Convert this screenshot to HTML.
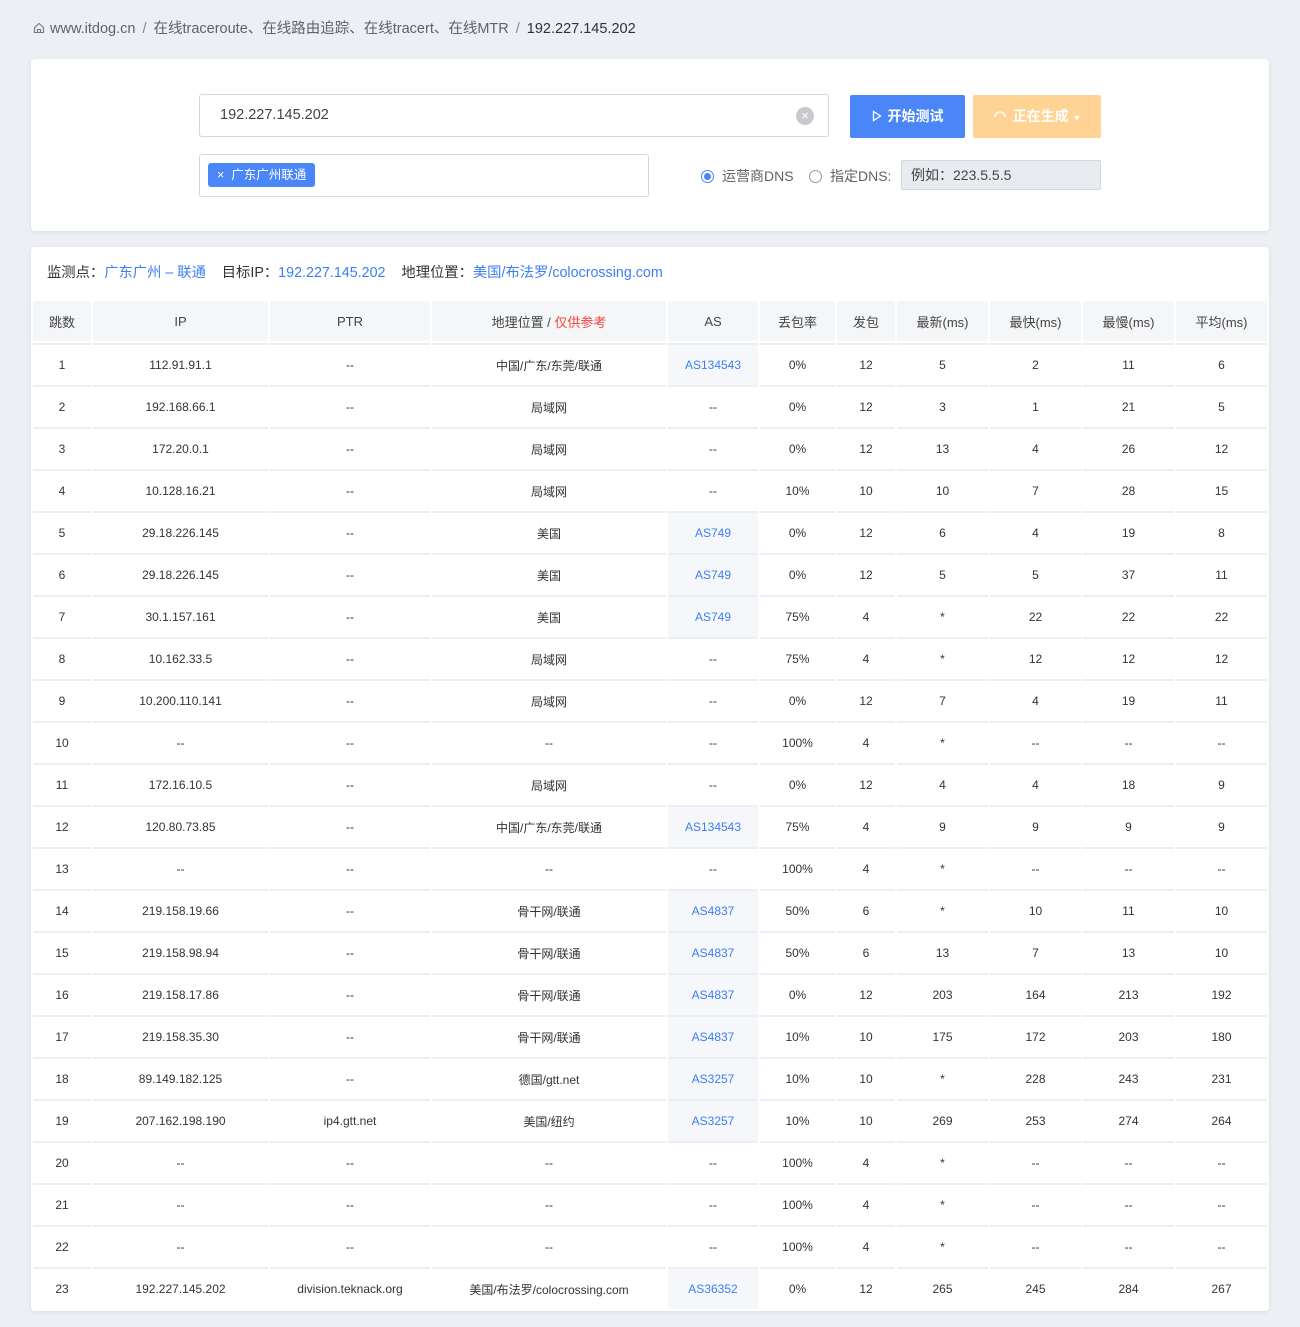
<!DOCTYPE html>
<html><head><meta charset="utf-8">
<style>
*{box-sizing:border-box;margin:0;padding:0}
body{width:1300px;height:1327px;background:#eceff4;font-family:"Liberation Sans","Noto Sans CJK SC",sans-serif;color:#333;overflow:hidden;position:relative}
.bc{position:absolute;left:33px;top:19px;font-size:14.5px;color:#606266;line-height:20px}
.bc .sep{margin:0 7px;color:#888}
.bc b{font-weight:normal;color:#303133}
.card{position:absolute;left:31px;width:1238px;background:#fff;border-radius:4px;box-shadow:0 1px 4px rgba(0,0,0,.08)}
.c1{top:59px;height:172px}
.c2{top:247px;height:1064px}
.inp{position:absolute;left:168px;top:35px;width:630px;height:43px;border:1px solid #d4d7de;border-radius:3px;font-size:14.5px;padding-left:20px;line-height:41px;color:#444}
.clr{position:absolute;right:14px;top:12px;width:18px;height:18px;border-radius:50%;background:#c8c9cc;color:#fff;font-size:13px;line-height:18px;text-align:center}
.tagbox{position:absolute;left:168px;top:95px;width:450px;height:43px;border:1px solid #d4d7de;border-radius:3px}
.tag{position:absolute;left:8px;top:8px;height:24px;padding:0 9px;background:#4a86f7;color:#fff;border-radius:3px;font-size:12.5px;line-height:24px}
.btn{position:absolute;top:36px;height:43px;color:#fff;font-size:14px;line-height:43px;text-align:center;border-radius:2px;font-weight:bold}
.b1{left:819px;width:115px;background:#4a86f7}
.b2{left:942px;width:128px;background:#fed394}
.radio{position:absolute;top:108px;font-size:14px;color:#606266;line-height:18px}
.rd{display:inline-block;width:13px;height:13px;border-radius:50%;border:1px solid #999;vertical-align:-2px;margin-right:8px;position:relative}
.rd.on{border-color:#4a86f7}
.rd.on:after{content:"";position:absolute;left:2px;top:2px;width:7px;height:7px;border-radius:50%;background:#4a86f7}
.dns{position:absolute;left:870px;top:101px;width:200px;height:30px;background:#e8ebef;border:1px solid #d4d7de;border-radius:2px;font-size:14px;line-height:28px;padding-left:9px;color:#444}
.info{position:absolute;left:16px;top:17px;font-size:14.3px;color:#333;line-height:18px}
.info a{color:#3d7ef6;text-decoration:none}
table{position:absolute;left:0;top:54px;border-collapse:separate;border-spacing:2px 0;table-layout:fixed;width:1238px}
th{height:42px;background:#f5f6f8;font-weight:normal;font-size:13px;color:#444;border-bottom:2px solid #fff}
td{height:42px;text-align:center;font-size:12px;color:#333;border-top:2px solid #eceef2}
td.as{color:#3d7ef6}
td.asb{background:#f5f7fa}
.red{color:#f5443a}
</style></head><body>
<div class="bc"><svg width="12" height="12" viewBox="0 0 12 12" style="vertical-align:-1px;margin-right:5px"><path d="M1.5 5.5L6 1.5L10.5 5.5V10.5H1.5Z M4.5 10.5V7.5H7.5V10.5" fill="none" stroke="#777" stroke-width="1.1"/></svg>www.itdog.cn<span class="sep">/</span>在线traceroute、在线路由追踪、在线tracert、在线MTR<span class="sep">/</span><b>192.227.145.202</b></div>
<div class="card c1">
<div class="inp">192.227.145.202<div class="clr">×</div></div>
<div class="tagbox"><div class="tag">×&nbsp; 广东广州联通</div></div>
<div class="btn b1"><svg width="10" height="12" viewBox="0 0 10 12" style="vertical-align:-1px;margin-right:6px"><path d="M1.5 1.5L8.5 6L1.5 10.5Z" fill="none" stroke="#fff" stroke-width="1.3"/></svg>开始测试</div>
<div class="btn b2"><svg width="14" height="10" viewBox="0 0 14 10" style="margin-right:6px"><path d="M2 6A5 5 0 0 1 12 6" fill="none" stroke="#fff" stroke-width="1.5"/></svg>正在生成 <span style="font-size:9px">▼</span></div>
<div class="radio" style="left:670px"><span class="rd on"></span>运营商DNS</div>
<div class="radio" style="left:778px"><span class="rd"></span>指定DNS:</div>
<div class="dns">例如：223.5.5.5</div>
</div>
<div class="card c2">
<div class="info">监测点：<a>广东广州 – 联通</a>&nbsp;&nbsp;&nbsp;&nbsp;目标IP：<a>192.227.145.202</a>&nbsp;&nbsp;&nbsp;&nbsp;地理位置：<a>美国/布法罗/colocrossing.com</a></div>
<table>
<colgroup><col style="width:58px"><col style="width:175px"><col style="width:160px"><col style="width:234px"><col style="width:90px"><col style="width:75px"><col style="width:58px"><col style="width:91px"><col style="width:91px"><col style="width:91px"><col style="width:91px"></colgroup>
<thead><tr><th>跳数</th><th>IP</th><th>PTR</th><th>地理位置 / <span class="red">仅供参考</span></th><th>AS</th><th>丢包率</th><th>发包</th><th>最新(ms)</th><th>最快(ms)</th><th>最慢(ms)</th><th>平均(ms)</th></tr></thead>
<tbody>
<tr><td>1</td><td>112.91.91.1</td><td>--</td><td>中国/广东/东莞/联通</td><td class="as asb">AS134543</td><td>0%</td><td>12</td><td>5</td><td>2</td><td>11</td><td>6</td></tr>
<tr><td>2</td><td>192.168.66.1</td><td>--</td><td>局域网</td><td>--</td><td>0%</td><td>12</td><td>3</td><td>1</td><td>21</td><td>5</td></tr>
<tr><td>3</td><td>172.20.0.1</td><td>--</td><td>局域网</td><td>--</td><td>0%</td><td>12</td><td>13</td><td>4</td><td>26</td><td>12</td></tr>
<tr><td>4</td><td>10.128.16.21</td><td>--</td><td>局域网</td><td>--</td><td>10%</td><td>10</td><td>10</td><td>7</td><td>28</td><td>15</td></tr>
<tr><td>5</td><td>29.18.226.145</td><td>--</td><td>美国</td><td class="as asb">AS749</td><td>0%</td><td>12</td><td>6</td><td>4</td><td>19</td><td>8</td></tr>
<tr><td>6</td><td>29.18.226.145</td><td>--</td><td>美国</td><td class="as asb">AS749</td><td>0%</td><td>12</td><td>5</td><td>5</td><td>37</td><td>11</td></tr>
<tr><td>7</td><td>30.1.157.161</td><td>--</td><td>美国</td><td class="as asb">AS749</td><td>75%</td><td>4</td><td>*</td><td>22</td><td>22</td><td>22</td></tr>
<tr><td>8</td><td>10.162.33.5</td><td>--</td><td>局域网</td><td>--</td><td>75%</td><td>4</td><td>*</td><td>12</td><td>12</td><td>12</td></tr>
<tr><td>9</td><td>10.200.110.141</td><td>--</td><td>局域网</td><td>--</td><td>0%</td><td>12</td><td>7</td><td>4</td><td>19</td><td>11</td></tr>
<tr><td>10</td><td>--</td><td>--</td><td>--</td><td>--</td><td>100%</td><td>4</td><td>*</td><td>--</td><td>--</td><td>--</td></tr>
<tr><td>11</td><td>172.16.10.5</td><td>--</td><td>局域网</td><td>--</td><td>0%</td><td>12</td><td>4</td><td>4</td><td>18</td><td>9</td></tr>
<tr><td>12</td><td>120.80.73.85</td><td>--</td><td>中国/广东/东莞/联通</td><td class="as asb">AS134543</td><td>75%</td><td>4</td><td>9</td><td>9</td><td>9</td><td>9</td></tr>
<tr><td>13</td><td>--</td><td>--</td><td>--</td><td>--</td><td>100%</td><td>4</td><td>*</td><td>--</td><td>--</td><td>--</td></tr>
<tr><td>14</td><td>219.158.19.66</td><td>--</td><td>骨干网/联通</td><td class="as asb">AS4837</td><td>50%</td><td>6</td><td>*</td><td>10</td><td>11</td><td>10</td></tr>
<tr><td>15</td><td>219.158.98.94</td><td>--</td><td>骨干网/联通</td><td class="as asb">AS4837</td><td>50%</td><td>6</td><td>13</td><td>7</td><td>13</td><td>10</td></tr>
<tr><td>16</td><td>219.158.17.86</td><td>--</td><td>骨干网/联通</td><td class="as asb">AS4837</td><td>0%</td><td>12</td><td>203</td><td>164</td><td>213</td><td>192</td></tr>
<tr><td>17</td><td>219.158.35.30</td><td>--</td><td>骨干网/联通</td><td class="as asb">AS4837</td><td>10%</td><td>10</td><td>175</td><td>172</td><td>203</td><td>180</td></tr>
<tr><td>18</td><td>89.149.182.125</td><td>--</td><td>德国/gtt.net</td><td class="as asb">AS3257</td><td>10%</td><td>10</td><td>*</td><td>228</td><td>243</td><td>231</td></tr>
<tr><td>19</td><td>207.162.198.190</td><td>ip4.gtt.net</td><td>美国/纽约</td><td class="as asb">AS3257</td><td>10%</td><td>10</td><td>269</td><td>253</td><td>274</td><td>264</td></tr>
<tr><td>20</td><td>--</td><td>--</td><td>--</td><td>--</td><td>100%</td><td>4</td><td>*</td><td>--</td><td>--</td><td>--</td></tr>
<tr><td>21</td><td>--</td><td>--</td><td>--</td><td>--</td><td>100%</td><td>4</td><td>*</td><td>--</td><td>--</td><td>--</td></tr>
<tr><td>22</td><td>--</td><td>--</td><td>--</td><td>--</td><td>100%</td><td>4</td><td>*</td><td>--</td><td>--</td><td>--</td></tr>
<tr><td>23</td><td>192.227.145.202</td><td>division.teknack.org</td><td>美国/布法罗/colocrossing.com</td><td class="as asb">AS36352</td><td>0%</td><td>12</td><td>265</td><td>245</td><td>284</td><td>267</td></tr>
</tbody></table>
</div>
</body></html>
